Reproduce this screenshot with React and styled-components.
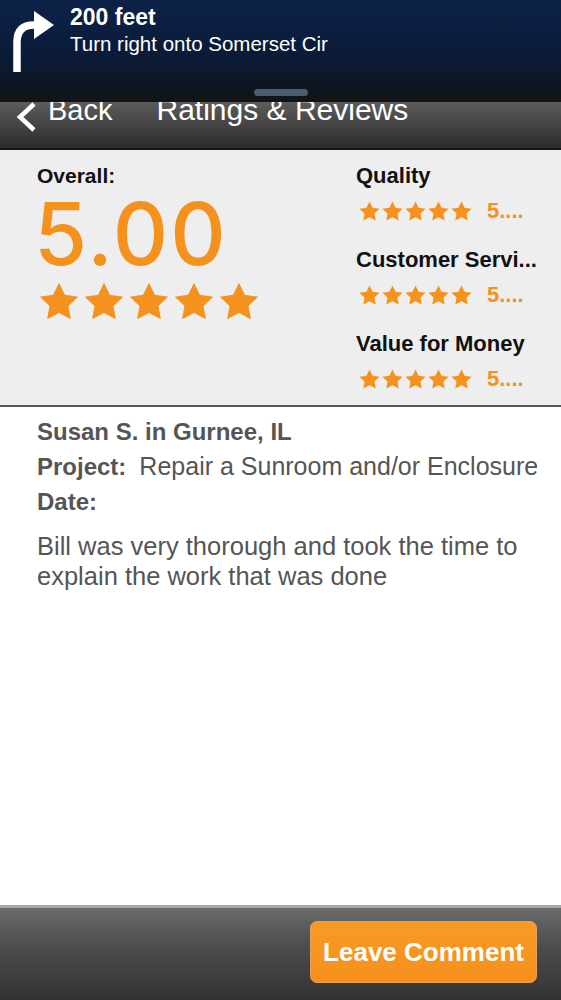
import React from "react";
import styled, { createGlobalStyle } from "styled-components";

const GlobalStyle = createGlobalStyle`
  *, *::before, *::after {
    box-sizing: border-box;
  }
  html, body {
    margin: 0;
    padding: 0;
    background: #fff;
  }
  body {
    font-family: "Liberation Sans", Arial, sans-serif;
  }
`;

const ORANGE = "#f5921e";

const categories = [
  { name: "Quality", score: "5...." },
  { name: "Customer Servi...", score: "5...." },
  { name: "Value for Money", score: "5...." },
];

const Screen = styled.div`
  width: 561px;
  height: 1000px;
  display: flex;
  flex-direction: column;
  overflow: hidden;
`;

const Banner = styled.div`
  height: 102px;
  flex: none;
  background: linear-gradient(180deg, #0c2247 0%, #0a1b38 55%, #0f1520 85%, #121416 100%);
  display: flex;
  flex-direction: column;
  align-items: center;
  padding-bottom: 6px;
`;

const BannerRow = styled.div`
  align-self: stretch;
  display: flex;
  align-items: flex-start;
  padding: 4px 0 0 12px;
  gap: 14px;
  flex: 1;
`;

const Directions = styled.div`
  display: flex;
  flex-direction: column;
  color: #fff;
`;

const Distance = styled.div`
  font-size: 23px;
  font-weight: 700;
  line-height: 26px;
`;

const Street = styled.div`
  font-size: 20.5px;
  line-height: 24px;
  margin-top: 2px;
`;

const Handle = styled.div`
  width: 54px;
  height: 7px;
  border-radius: 4px;
  background: #4c5b6e;
`;

const NavBar = styled.div`
  height: 48px;
  flex: none;
  overflow: hidden;
  background: linear-gradient(180deg, #5c5c5c 0%, #444 50%, #2c2c2c 100%);
  border-bottom: 2px solid #151515;
  display: flex;
  align-items: flex-start;
  color: #fff;
`;

const BackButton = styled.div`
  display: flex;
  align-items: flex-start;
  margin-left: 14px;
  margin-top: -8px;
  gap: 10px;
  font-size: 29px;
  line-height: 32px;
  svg {
    margin-top: 4px;
  }
`;

const Title = styled.div`
  margin-left: 44px;
  margin-top: -8px;
  font-size: 30px;
  line-height: 32px;
`;

const RatingPanel = styled.div`
  height: 257px;
  flex: none;
  background: #eeeeee;
  border-bottom: 2px solid #555;
  display: flex;
  justify-content: space-between;
  padding: 14px 14px 0 37px;
`;

const OverallCol = styled.div`
  display: flex;
  flex-direction: column;
`;

const Label = styled.div`
  font-size: 21px;
  font-weight: 700;
  color: #111;
  line-height: 24px;
`;

const BigScore = styled.div`
  font-family: Inter, "Liberation Sans", sans-serif;
  font-size: 86px;
  font-weight: 500;
  letter-spacing: 2px;
  color: ${ORANGE};
  line-height: 84px;
  margin-top: 4px;
  margin-left: -3px;
`;

const Stars = styled.div`
  display: flex;
  gap: ${(p) => p.$gap}px;
  margin-top: ${(p) => p.$top || 0}px;
`;

const CategoryCol = styled.div`
  display: flex;
  flex-direction: column;
  width: 191px;
`;

const Category = styled.div`
  display: flex;
  flex-direction: column;
  margin-bottom: 24px;
`;

const CategoryName = styled(Label)`
  font-size: 22px;
  white-space: nowrap;
`;

const CategoryRow = styled.div`
  display: flex;
  align-items: center;
  gap: 14px;
  margin-top: 10px;
  margin-left: 2px;
`;

const SmallScore = styled.span`
  color: ${ORANGE};
  font-size: 22px;
  font-weight: 700;
`;

const Review = styled.div`
  flex: 1;
  padding: 11px 8px 0 37px;
  color: #555;
`;

const Reviewer = styled.div`
  font-size: 24px;
  font-weight: 700;
  line-height: 28px;
`;

const InfoLine = styled.div`
  font-size: 25px;
  line-height: 28px;
  margin-top: 6px;
  b {
    font-size: 24px;
    font-weight: 700;
    margin-right: 13px;
  }
`;

const Body = styled.p`
  margin: 15px 0 0;
  font-size: 25.5px;
  line-height: 30px;
`;

const BottomBar = styled.div`
  height: 95px;
  flex: none;
  border-top: 3px solid #a8a8a8;
  background: linear-gradient(180deg, #6a6a6a 0%, #4b4b4b 45%, #333 100%);
  display: flex;
  justify-content: flex-end;
  align-items: flex-start;
  padding: 13px 24px 0 0;
`;

const ActionButton = styled.button`
  width: 227px;
  height: 62px;
  border-radius: 7px;
  border: 1px solid #e8a256;
  background: linear-gradient(180deg, #f89a26 0%, #f6901c 100%);
  color: #fff;
  font-family: "Liberation Sans", Arial, sans-serif;
  font-size: 26px;
  font-weight: 700;
  padding: 0;
`;

const Star = ({ size }) => (
  <svg width={size} height={size} viewBox="0 0 24 24">
    <path
      d="M12 1.5l3.2 6.6 7.3 1-5.3 5.1 1.3 7.2L12 18l-6.5 3.4 1.3-7.2L1.5 9.1l7.3-1z"
      fill={ORANGE}
    />
  </svg>
);

const StarRow = ({ size, gap, top }) => (
  <Stars $gap={gap} $top={top}>
    {[0, 1, 2, 3, 4].map((i) => (
      <Star key={i} size={size} />
    ))}
  </Stars>
);

const TurnArrow = () => (
  <svg width="44" height="70" viewBox="0 0 44 70">
    <path
      d="M5 68 V38 Q5 21 22 21 H26"
      fill="none"
      stroke="#fff"
      strokeWidth="7.5"
    />
    <path d="M22 7 L42 21 L22 35 Z" fill="#fff" />
  </svg>
);

const Chevron = () => (
  <svg width="24" height="36" viewBox="0 0 24 36">
    <polyline
      points="20,6 6,19 20,32"
      fill="none"
      stroke="#fff"
      strokeWidth="4.5"
    />
  </svg>
);

export default function App() {
  return (
    <>
      <GlobalStyle />
      <Screen>
        <Banner>
          <BannerRow>
            <TurnArrow />
            <Directions>
              <Distance>200 feet</Distance>
              <Street>Turn right onto Somerset Cir</Street>
            </Directions>
          </BannerRow>
          <Handle />
        </Banner>
        <NavBar>
          <BackButton>
            <Chevron />
            <span>Back</span>
          </BackButton>
          <Title>Ratings &amp; Reviews</Title>
        </NavBar>
        <RatingPanel>
          <OverallCol>
            <Label>Overall:</Label>
            <BigScore>5.00</BigScore>
            <StarRow size={44} gap={1} top={4} />
          </OverallCol>
          <CategoryCol>
            {categories.map((c) => (
              <Category key={c.name}>
                <CategoryName>{c.name}</CategoryName>
                <CategoryRow>
                  <StarRow size={23} gap={0} />
                  <SmallScore>{c.score}</SmallScore>
                </CategoryRow>
              </Category>
            ))}
          </CategoryCol>
        </RatingPanel>
        <Review>
          <Reviewer>Susan S. in Gurnee, IL</Reviewer>
          <InfoLine>
            <b>Project:</b>Repair a Sunroom and/or Enclosure
          </InfoLine>
          <InfoLine>
            <b>Date:</b>
          </InfoLine>
          <Body>
            Bill was very thorough and took the time to explain the work that
            was done
          </Body>
        </Review>
        <BottomBar>
          <ActionButton>Leave Comment</ActionButton>
        </BottomBar>
      </Screen>
    </>
  );
}
